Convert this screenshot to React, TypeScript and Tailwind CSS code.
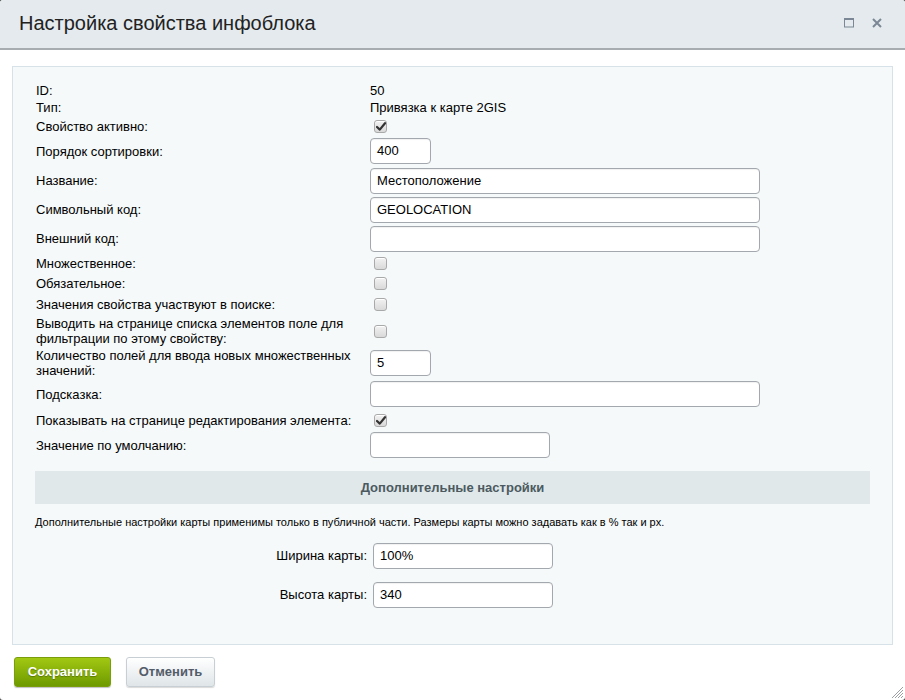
import React from "react";

const font = "font-['Liberation_Sans',Arial,sans-serif]";

function Check({ checked }: { checked?: boolean }) {
  return (
    <span className="ml-[4px] flex h-[13px] w-[13px] items-center justify-center rounded-[3px] border border-[#a9a9a9] bg-gradient-to-b from-[#f2f2f2] to-[#d9d9d9] shadow-[inset_0_1px_0_#fff]">
      {checked && (
        <svg width="10" height="9" viewBox="0 0 10 9">
          <path d="M1 5 L3.8 7.6 L9 1.2" fill="none" stroke="#333" strokeWidth="2.2" strokeLinecap="round" strokeLinejoin="round" />
        </svg>
      )}
    </span>
  );
}

function Input({ value, w }: { value?: string; w: string }) {
  return (
    <div className={`flex h-[26px] items-center rounded-[4px] border border-[#a3a8ae] bg-white pl-[6px] text-[13px] text-black shadow-[inset_0_1px_1px_rgba(0,0,0,0.06)] ${w}`}>
      {value}
    </div>
  );
}

function Row({ label, h, children }: { label: string; h: string; children?: React.ReactNode }) {
  return (
    <div className={`flex items-center ${h}`}>
      <div className="w-[335px] pl-[1px] pr-[15px] text-[13px] leading-[15px] text-black">{label}</div>
      <div className="flex items-center">{children}</div>
    </div>
  );
}

export default function App() {
  return (
    <div className={`h-[700px] w-[905px] bg-[#4a4a4a] ${font}`}>
      <div className="relative flex h-full flex-col overflow-hidden rounded-[3px] bg-white">
        {/* header */}
        <div className="flex h-[50px] shrink-0 items-center justify-between border-b-2 border-[#a6acb0] bg-[#e4eaed] pl-[19px] pr-[23px]">
          <div className="pb-[2px] text-[20px] text-[#222]">Настройка свойства инфоблока</div>
          <div className="flex items-center gap-[18px] pb-[2px]">
            <svg width="10" height="10" viewBox="0 0 10 10">
              <rect x="0.5" y="0.5" width="9" height="8.5" fill="none" stroke="#7b8794" strokeWidth="1" />
              <rect x="0" y="0" width="10" height="2" fill="#7b8794" />
            </svg>
            <svg width="10" height="10" viewBox="0 0 10 10">
              <path d="M1 1 L9 9 M9 1 L1 9" stroke="#7b8794" strokeWidth="2" />
            </svg>
          </div>
        </div>

        {/* body */}
        <div className="px-[12px] pt-[16px]">
          <div className="h-[579px] border border-[#d6e2e8] bg-[#f5f9f9] px-[22px] pt-[15px]">
            <div>
              <Row label="ID:" h="h-[17px]">
                <span className="text-[13px] text-black">50</span>
              </Row>
              <Row label="Тип:" h="h-[17px]">
                <span className="text-[13px] text-black">Привязка к карте 2GIS</span>
              </Row>
              <Row label="Свойство активно:" h="h-[20px]">
                <Check checked />
              </Row>
              <Row label="Порядок сортировки:" h="h-[30px]">
                <Input value="400" w="w-[61px]" />
              </Row>
              <Row label="Название:" h="h-[29px]">
                <Input value="Местоположение" w="w-[390px]" />
              </Row>
              <Row label="Символьный код:" h="h-[29px]">
                <Input value="GEOLOCATION" w="w-[390px]" />
              </Row>
              <Row label="Внешний код:" h="h-[29px]">
                <Input w="w-[390px]" />
              </Row>
              <Row label="Множественное:" h="h-[20px]">
                <Check />
              </Row>
              <Row label="Обязательное:" h="h-[21px]">
                <Check />
              </Row>
              <Row label="Значения свойства участвуют в поиске:" h="h-[21px]">
                <Check />
              </Row>
              <Row label="Выводить на странице списка элементов поле для фильтрации по этому свойству:" h="h-[32px]">
                <Check />
              </Row>
              <Row label="Количество полей для ввода новых множественных значений:" h="h-[32px]">
                <Input value="5" w="w-[61px]" />
              </Row>
              <Row label="Подсказка:" h="h-[30px]">
                <Input w="w-[390px]" />
              </Row>
              <Row label="Показывать на странице редактирования элемента:" h="h-[22px]">
                <Check checked />
              </Row>
              <Row label="Значение по умолчанию:" h="h-[28px]">
                <Input w="w-[180px]" />
              </Row>
            </div>

            <div className="mt-[12px] flex h-[33px] items-center justify-center bg-[#e0e8ea] text-[13px] font-bold text-[#4c5a60]">
              Дополнительные настройки
            </div>

            <div className="mt-[11px] h-[14px] text-[11px] leading-[14px] text-black">
              Дополнительные настройки карты применимы только в публичной части. Размеры карты можно задавать как в % так и px.
            </div>

            <div className="mt-[14px] flex items-center">
              <div className="w-[332px] text-right text-[13px] text-black">Ширина карты:</div>
              <div className="ml-[6px]">
                <Input value="100%" w="w-[180px]" />
              </div>
            </div>
            <div className="mt-[13px] flex items-center">
              <div className="w-[332px] text-right text-[13px] text-black">Высота карты:</div>
              <div className="ml-[6px]">
                <Input value="340" w="w-[180px]" />
              </div>
            </div>
          </div>
        </div>

        {/* footer */}
        <div className="flex items-center gap-[15px] pl-[14px] pt-[12px]">
          <div className="flex h-[30px] w-[97px] items-center justify-center rounded-[3px] border border-[#7a9d0c] bg-gradient-to-b from-[#a2c813] to-[#6e9a00] text-[13px] font-bold text-white shadow-[0_1px_1px_rgba(0,0,0,0.25)] [text-shadow:0_1px_1px_rgba(0,0,0,0.3)]">
            Сохранить
          </div>
          <div className="flex h-[30px] w-[89px] items-center justify-center rounded-[3px] border border-[#c8cfd4] bg-gradient-to-b from-[#ffffff] to-[#dfe5e8] text-[13px] font-bold text-[#535c69] shadow-[0_1px_1px_rgba(0,0,0,0.15)]">
            Отменить
          </div>
        </div>

        {/* resize grip */}
        <svg className="absolute bottom-[1px] right-[1px]" width="14" height="14" viewBox="0 0 14 14">
          <path d="M13 2 L2 13 M13 5 L5 13 M13 8 L8 13 M13 11 L11 13" stroke="#9aa0a4" strokeWidth="1" />
        </svg>
      </div>
    </div>
  );
}
